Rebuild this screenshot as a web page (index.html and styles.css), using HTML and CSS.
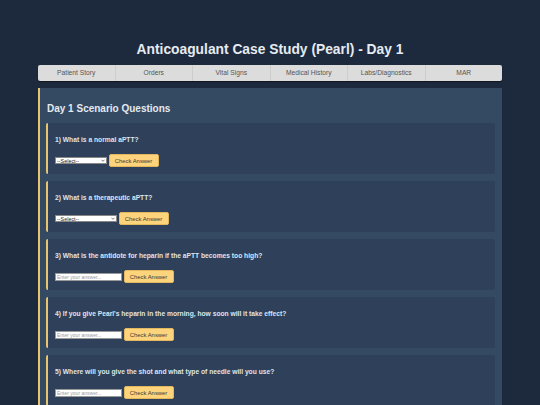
FILE: index.html
```html
<!DOCTYPE html>
<html lang="en">
<head>
    <meta charset="UTF-8">
    <meta name="viewport" content="width=device-width, initial-scale=1.0">
    <title>Anticoagulant Case Study (Pearl) - Day 1</title>
    <link rel="stylesheet" href="styles.css">
</head>
<body>
    <div class="page">
        <h1 class="title">Anticoagulant Case Study (Pearl) - Day 1</h1>

        <nav class="tabs">
            <button class="tab">Patient Story</button>
            <button class="tab">Orders</button>
            <button class="tab">Vital Signs</button>
            <button class="tab">Medical History</button>
            <button class="tab">Labs/Diagnostics</button>
            <button class="tab">MAR</button>
        </nav>

        <section class="panel">
            <h2 class="panel-title">Day 1 Scenario Questions</h2>

            <div class="question">
                <p class="q-text">1) What is a normal aPTT?</p>
                <div class="q-row">
                    <div class="select-wrap select-sm">
                        <select class="q-select">
                            <option>--Select--</option>
                        </select>
                        <svg class="chevron" viewBox="0 0 10 6"><path d="M1 1l4 4 4-4" fill="none" stroke="#333" stroke-width="1.6"/></svg>
                    </div>
                    <button class="check-btn">Check Answer</button>
                </div>
            </div>

            <div class="question">
                <p class="q-text">2) What is a therapeutic aPTT?</p>
                <div class="q-row">
                    <div class="select-wrap select-md">
                        <select class="q-select">
                            <option>--Select--</option>
                        </select>
                        <svg class="chevron" viewBox="0 0 10 6"><path d="M1 1l4 4 4-4" fill="none" stroke="#333" stroke-width="1.6"/></svg>
                    </div>
                    <button class="check-btn">Check Answer</button>
                </div>
            </div>

            <div class="question">
                <p class="q-text">3) What is the antidote for heparin if the aPTT becomes too high?</p>
                <div class="q-row">
                    <input type="text" class="q-input" placeholder="Enter your answer...">
                    <button class="check-btn">Check Answer</button>
                </div>
            </div>

            <div class="question">
                <p class="q-text">4) If you give Pearl's heparin in the morning, how soon will it take effect?</p>
                <div class="q-row">
                    <input type="text" class="q-input" placeholder="Enter your answer...">
                    <button class="check-btn">Check Answer</button>
                </div>
            </div>

            <div class="question">
                <p class="q-text">5) Where will you give the shot and what type of needle will you use?</p>
                <div class="q-row">
                    <input type="text" class="q-input" placeholder="Enter your answer...">
                    <button class="check-btn">Check Answer</button>
                </div>
            </div>
        </section>
    </div>
</body>
</html>
```
FILE: styles.css
```css
body {
    margin: 0;
    padding: 0;
    background-color: #1d293c;
    font-family: "Liberation Sans", Arial, sans-serif;
    color: #e2e8f0;
    overflow: hidden;
}
.page {
    width: 464px;
    margin: 0 auto;
    padding-top: 42px;
}
.title {
    margin: 0 0 7px;
    font-size: 13.8px;
    line-height: 16px;
    text-align: center;
    color: #e6ebf2;
}

/* tab bar */
.tabs {
    display: flex;
    height: 16px;
    background-color: #dcdcdc;
    border-radius: 2px;
    box-shadow: 0 1px 1px rgba(0, 0, 0, 0.45);
    overflow: hidden;
}
.tab {
    flex: 1;
    margin: 0;
    padding: 0;
    border: none;
    border-right: 1px solid #cdcdcd;
    background: transparent;
    font-family: inherit;
    font-size: 6.7px;
    line-height: 16px;
    color: #555;
}
.tab:last-child {
    border-right: none;
}

/* questions panel */
.panel {
    margin-top: 7px;
    padding: 15px 7px 20px 6px;
    background-color: #344a63;
    border-left: 2px solid #e9c46f;
}
.panel-title {
    margin: 0 0 8px 1px;
    font-size: 10px;
    line-height: 12px;
    color: #e4e9f0;
}
.question {
    margin-bottom: 7px;
    padding: 13px 7px 7px;
    background-color: #2e405a;
    border-left: 2px solid #e9c46f;
    border-radius: 2px;
}
.q-text {
    margin: 0 0 10px;
    font-size: 6.7px;
    font-weight: bold;
    line-height: 8px;
    color: #dfe5ec;
}
.q-row {
    display: flex;
    align-items: center;
    gap: 1.5px;
}
.select-wrap {
    position: relative;
    height: 7px;
}
.select-sm {
    width: 52px;
}
.select-md {
    width: 62px;
}
.q-select {
    appearance: none;
    width: 100%;
    height: 7px;
    margin: 0;
    padding: 0 0 0 1px;
    border: 0.5px solid #888;
    border-radius: 0;
    background-color: #fff;
    font-family: inherit;
    font-size: 5.4px;
    line-height: 6px;
    color: #222;
    display: block;
}
.chevron {
    position: absolute;
    right: 2px;
    top: 2px;
    width: 4px;
    height: 3px;
}
.q-input {
    width: 67px;
    height: 8px;
    box-sizing: border-box;
    margin: 0;
    padding: 0 1px;
    border: 0.5px solid #999;
    border-radius: 0;
    background-color: #fff;
    font-family: inherit;
    font-size: 5px;
    color: #222;
}
.q-input::placeholder {
    color: #999;
}
.check-btn {
    width: 50px;
    height: 13px;
    margin: 0;
    padding: 0;
    border: 0.5px solid #e2b75e;
    border-radius: 2px;
    background-color: #fdd47c;
    font-family: inherit;
    font-size: 5.9px;
    color: #3a3a3a;
    cursor: pointer;
}
```
